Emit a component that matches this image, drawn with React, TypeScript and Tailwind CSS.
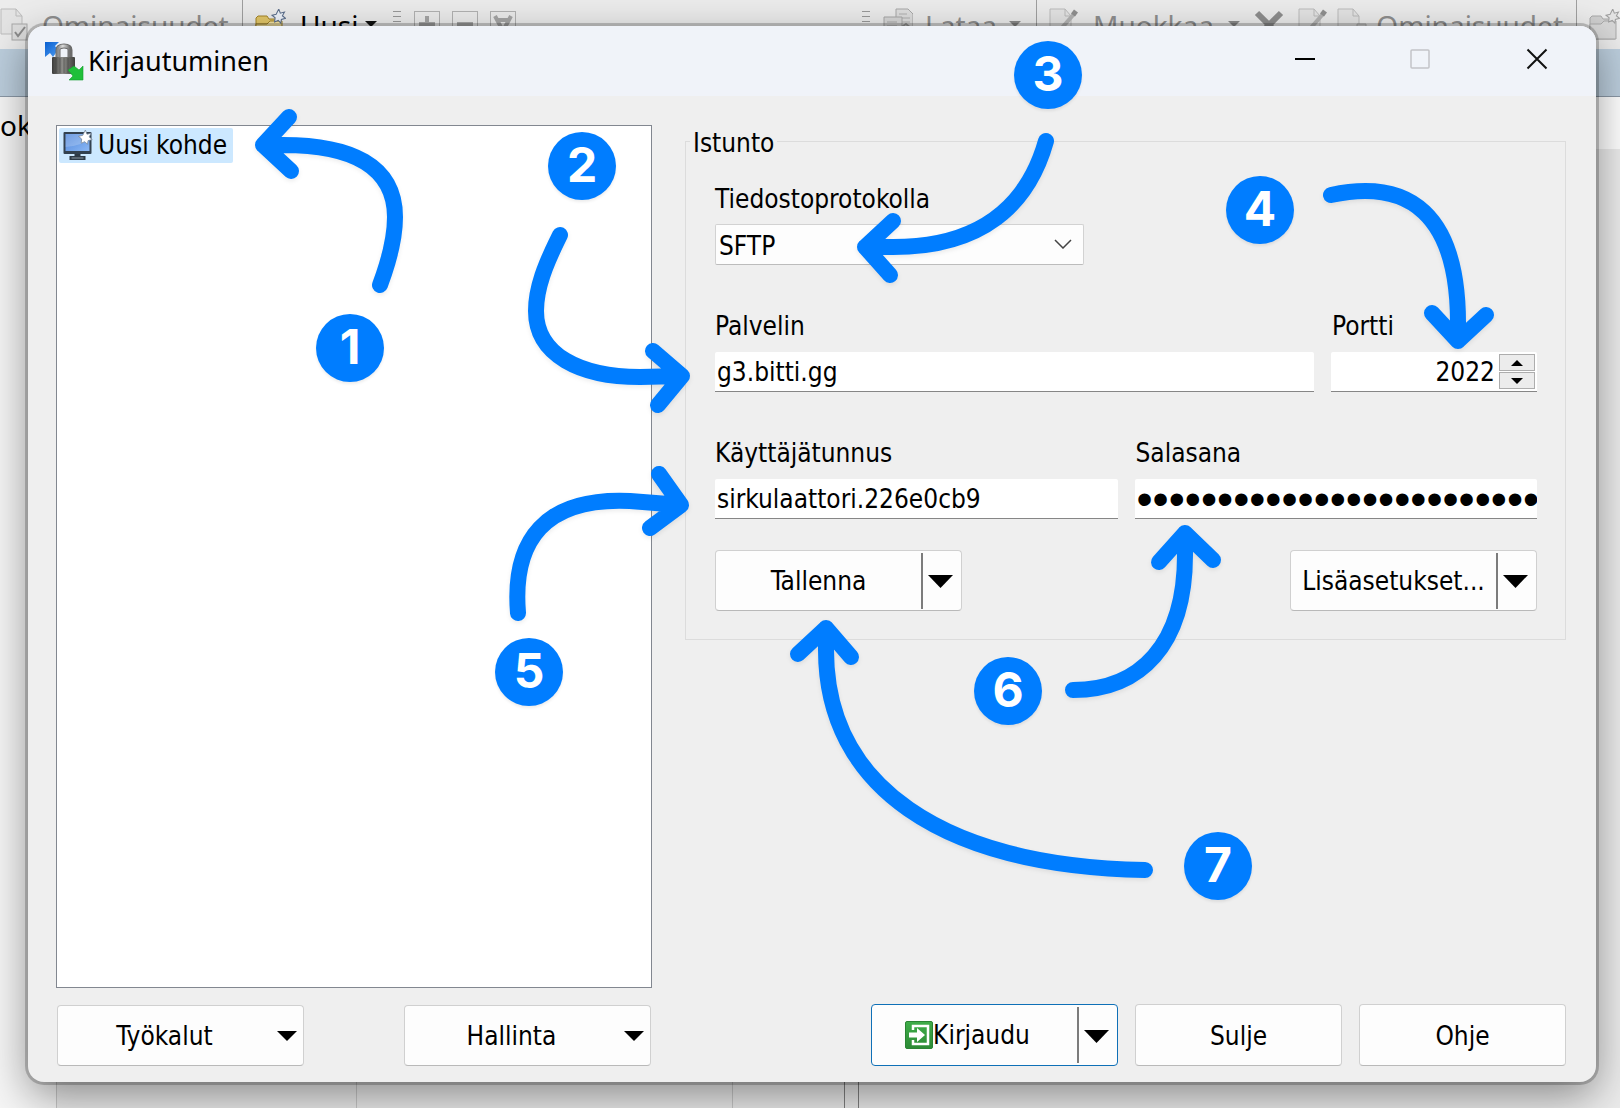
import React from "react";

const buttonFace =
  "rounded-[4px] border border-[#d0d0d0] border-b-[#b9b9b9] bg-[#fdfdfd] text-black";
const inputFace =
  "block h-[40px] w-full rounded-t-[2px] border-b border-[#868686] bg-white outline-none";

function Caret({ small = false }: { small?: boolean }) {
  return (
    <svg width={small ? 20 : 25} height={small ? 10 : 13} viewBox="0 0 26 13" preserveAspectRatio="none" aria-hidden="true">
      <path d="M0 0h26L13 13z" fill="#000" />
    </svg>
  );
}

function SmallCaret({ muted = false }: { muted?: boolean }) {
  return (
    <svg width="12" height="7" viewBox="0 0 12 7" aria-hidden="true">
      <path d="M0 0h12L6 6z" fill={muted ? "#8a8a8a" : "#111"} />
    </svg>
  );
}

const STAR = "M13 0l3 8 8-2-4 7 6 5-8 2-1 7-5-5-7 3 1-8-6-5 8-2z";

function FolderIcon({ muted = false }: { muted?: boolean }) {
  const line = muted ? "#a9a9a9" : "#a58527";
  return (
    <svg width="31" height="32" viewBox="0 0 31 32" aria-hidden="true">
      <path d="M1 30V9l2-2h9l2 3h12v20z" fill={muted ? "#cfcfcf" : "#e3c769"} stroke={line} />
      <path d="M1 30V15h11l3-3h12v18z" fill={muted ? "#d8d8d8" : "#f7e5a4"} stroke={line} />
      <path
        d={STAR}
        transform="translate(17 0) scale(.52)"
        fill={muted ? "#e4e4e4" : "#eef3fa"}
        stroke={muted ? "#a0a0a0" : "#5c6f8c"}
        strokeWidth="2"
      />
    </svg>
  );
}

function SheetIcon({ mark }: { mark: "check" | "pencil" | "none" }) {
  return (
    <svg width="30" height="34" viewBox="0 0 30 34" aria-hidden="true">
      <path d="M1 1h15l6 7v18H1z" fill="#e4e4e4" stroke="#bcbcbc" />
      <path d="M16 1v7h6" fill="none" stroke="#bcbcbc" />
      {mark === "check" && (
        <g>
          <rect x="12" y="16" width="15" height="16" fill="#dedede" stroke="#a8a8a8" />
          <path d="M15 24l3 4 7-9" fill="none" stroke="#8c8c8c" strokeWidth="2" />
        </g>
      )}
      {mark === "pencil" && (
        <g>
          <path d="M11 22L25 6" stroke="#b4b4b4" strokeWidth="4" />
          <path d="M24 7l3-4" stroke="#909090" strokeWidth="5" />
        </g>
      )}
      {mark === "none" && <path d="M20 16h9v10h-9z" fill="#d6d6d6" stroke="#b0b0b0" />}
    </svg>
  );
}

function CopyIcon() {
  return (
    <svg width="30" height="34" viewBox="0 0 30 34" aria-hidden="true">
      <path d="M13 1h12l5 5v19H13z" fill="#dedede" stroke="#a8a8a8" />
      <path d="M16 6h8M16 10h11M16 14h11" stroke="#b0b0b0" />
      <path d="M1 9h18v20H1z" fill="#d8d8d8" stroke="#a8a8a8" />
      <path d="M4 14h10M4 18h10" stroke="#a8a8a8" />
      <path d="M17 20l6-4 6 5" fill="none" stroke="#9a9a9a" strokeWidth="2" />
    </svg>
  );
}

function Grip() {
  return (
    <svg width="9" height="32" viewBox="0 0 9 32" aria-hidden="true">
      <path d="M0 2.500h8M0 7.500h8M0 12.500h8M0 17.500h8M0 22.500h8" stroke="#9a9a9a" />
    </svg>
  );
}

function BoxIcon({ d }: { d: string }) {
  return (
    <svg width="26" height="32" viewBox="0 0 26 32" aria-hidden="true">
      <rect x=".5" y="2.500" width="25" height="25" fill="none" stroke="#b2b2b2" />
      <path d={d} fill="none" stroke="#a6a6a6" strokeWidth="4" />
    </svg>
  );
}

function Backdrop() {
  return (
    <div className="flex min-h-screen flex-col font-['Noto_Sans',sans-serif] text-[28px]">
      <div className="flex h-[49px] items-center overflow-hidden bg-[#ececec] text-[#8f8f8f]">
        <div className="flex w-[243px] shrink-0 items-center gap-[12px] self-stretch border-r border-[#a0a0a0]">
          <SheetIcon mark="check" />
          <span>Ominaisuudet</span>
        </div>
        <div className="flex flex-1 items-center">
          <div className="ml-[12px] flex w-[122px] items-center text-black">
            <FolderIcon />
            <span className="flex-1 pl-[14px]">Uusi</span>
            <SmallCaret />
          </div>
          <div className="ml-[16px] flex items-center gap-[12px]">
            <Grip />
            <BoxIcon d="M5 15h16M13 7v16" />
            <BoxIcon d="M5 15h16" />
            <BoxIcon d="M5 7l8 15 8-15M8 11h10" />
          </div>
        </div>
        <div className="flex w-[174px] shrink-0 items-center gap-[12px]">
          <Grip />
          <CopyIcon />
          <span>Lataa</span>
          <SmallCaret muted />
        </div>
        <div className="flex w-[541px] shrink-0 items-center gap-[14px] self-stretch border-x border-[#a0a0a0] pl-[12px]">
          <SheetIcon mark="pencil" />
          <span>Muokkaa</span>
          <SmallCaret muted />
          <svg width="30" height="32" viewBox="0 0 30 32" aria-hidden="true">
            <path d="M3 4l24 24M27 4L3 28" stroke="#8e8e8e" strokeWidth="6" />
          </svg>
          <div className="flex flex-1 items-center justify-between pr-[13px]">
            <SheetIcon mark="pencil" />
            <SheetIcon mark="none" />
            <span>Ominaisuudet</span>
          </div>
        </div>
        <div className="w-[43px] shrink-0 pl-[12px]">
          <FolderIcon muted />
        </div>
      </div>
      <div className="h-[48px] border-b border-[#8b98a6] bg-[#bccedd]" />
      <div className="flex flex-1 justify-between overflow-hidden bg-[#ececec]">
        <div className="w-[56px] bg-[#f6f6f6] pt-[7px] text-black">ok</div>
        <div className="flex flex-1 items-end">
          <div className="h-[26px] w-[301px] border-x border-[#c9c9c9]" />
          <div className="h-[26px] w-[376px] border-r border-[#c9c9c9]" />
          <div className="h-[26px] w-[111px]" />
          <div className="h-[30px] w-[15px] border-x border-[#808080]" />
        </div>
        <div className="w-[30px]">
          <div className="h-[52px] bg-white" />
        </div>
      </div>
    </div>
  );
}

function AppIcon() {
  return (
    <svg width="40" height="40" viewBox="0 0 40 40" aria-hidden="true">
      <defs>
        <linearGradient id="body" x1="0" x2="1">
          <stop offset="0" stopColor="#3a3a3a" />
          <stop offset=".45" stopColor="#8c8c88" />
          <stop offset="1" stopColor="#3f3f3d" />
        </linearGradient>
        <linearGradient id="shackle" x1="0" x2="1">
          <stop offset="0" stopColor="#8a8a8a" />
          <stop offset=".4" stopColor="#dcdcdc" />
          <stop offset="1" stopColor="#6c6c6c" />
        </linearGradient>
        <linearGradient id="blue" x1="0" y1="0" x2="1" y2="1">
          <stop offset="0" stopColor="#0a5fd0" />
          <stop offset="1" stopColor="#4d9bf0" />
        </linearGradient>
      </defs>
      <path d="M1 1h14l-4 4 3 4-5 7-3-4-5 4z" fill="url(#blue)" />
      <path d="M14 18V9q0-4 6-4t6 4v9" fill="#f0f3f9" stroke="#6a6a6a" strokeWidth="5" />
      <path d="M14 18V9q0-4 6-4t6 4v9" fill="none" stroke="url(#shackle)" strokeWidth="3" />
      <rect x="8" y="16" width="23" height="17" rx="1" fill="url(#body)" />
      <path d="M12 17v15M16 17v15M20 17v15M24 17v15" stroke="#222" strokeOpacity=".35" />
      <path d="M39 25v14H25l4-4-5-6 6-4 5 4z" fill="#1fbf3a" stroke="#12a02b" strokeWidth=".6" />
    </svg>
  );
}

function MonitorIcon() {
  return (
    <svg className="shrink-0" width="31" height="32" viewBox="0 0 30 32" aria-hidden="true">
      <defs>
        <linearGradient id="screen" x1="0" y1="0" x2="1" y2="1">
          <stop offset="0" stopColor="#4f86da" />
          <stop offset="1" stopColor="#8bb8f5" />
        </linearGradient>
      </defs>
      <rect x="1" y="2" width="28" height="22" rx="1" fill="#33414f" />
      <rect x="3" y="4" width="24" height="17" fill="url(#screen)" />
      <path d="M3 4h24v4Q20 16 3 17z" fill="#fff" fillOpacity=".2" />
      <path d="M12 24h6v3h-6zM7 26h16v4H7z" fill="#2e3a46" />
      <path d="M9 28h12" stroke="#8a97a3" />
      <path d={STAR} transform="translate(16 0) scale(.53)" fill="#fff" stroke="#77879a" strokeWidth="1.500" />
    </svg>
  );
}

function LoginIcon() {
  return (
    <svg width="28" height="28" viewBox="0 0 28 28" aria-hidden="true">
      <defs>
        <linearGradient id="green" x1="0" y1="0" x2="0" y2="1">
          <stop offset="0" stopColor="#3fae49" />
          <stop offset="1" stopColor="#2c8a35" />
        </linearGradient>
      </defs>
      <rect x=".5" y=".5" width="27" height="27" rx="1.500" fill="url(#green)" stroke="#2a8433" />
      <path d="M8 9V5h15v18H8v-4" fill="none" stroke="#fff" strokeWidth="2.500" />
      <path d="M4 11.500h8V7l8 7-8 7v-4.500H4z" fill="#fff" />
    </svg>
  );
}

function SplitButton({
  label,
  icon,
  primary = false,
}: {
  label: string;
  icon?: React.ReactNode;
  primary?: boolean;
}) {
  return (
    <div
      className={
        primary
          ? "flex h-[62px] w-[247px] items-center rounded-[4px] border border-[#0f70b7] bg-[#fdfdfd]"
          : "flex h-[61px] w-[247px] items-center rounded-[4px] border border-[#d0d0d0] border-b-[#b9b9b9] bg-[#fdfdfd]"
      }
    >
      <button
        type="button"
        className={
          primary
            ? "flex h-full flex-1 items-center justify-center whitespace-nowrap pr-[14px]"
            : "flex h-full flex-1 items-center justify-center whitespace-nowrap pt-[2px]"
        }
      >
        {icon}
        {label}
      </button>
      <span className="h-[56px] w-[2px] bg-[#7c7c7c]" />
      <button type="button" aria-label={label + " – valikko"} className="flex h-full w-[38px] items-center justify-center pr-[3px] pt-[2px]">
        <Caret />
      </button>
    </div>
  );
}

function MenuButton({ label }: { label: string }) {
  return (
    <button type="button" className={"flex h-[61px] w-[247px] items-center pr-[6px] " + buttonFace}>
      <span className="flex-1 pr-[6px] pt-[2px] text-center">{label}</span>
      <Caret small />
    </button>
  );
}

const ARROWS = [
  "M380 285Q395 245 395 217C395 165 350 145 283 145H263M289 117L263 145L291 171",
  "M560 235C545 265 536 288 536 311C536 355 580 377 640 377L682 376M653 351L682 376L658 405",
  "M1046 141C1028 205 982 247 893 247H865M893 221L865 247L890 275",
  "M1331 195C1410 178 1458 215 1458 323V341M1432 313L1458 341L1486 315",
  "M518 613C512 540 545 497 630 501L681 505M659 474L681 505L650 528",
  "M1073 690C1140 690 1185 645 1185 555V533M1159 562L1185 533L1213 560",
  "M1145 870C940 866 826 785 826 650V628M798 654L826 628L851 657",
];

const BADGES = [
  "left-[316px] top-[314px]",
  "left-[548px] top-[132px]",
  "left-[1014px] top-[41px]",
  "left-[1226px] top-[176px]",
  "left-[495px] top-[638px]",
  "left-[974px] top-[657px]",
  "left-[1184px] top-[832px]",
];

function Annotations() {
  return (
    <div className="pointer-events-none absolute inset-0">
      <svg
        className="absolute left-0 top-0 h-[1108px] w-[1620px] drop-shadow-[0_2px_2px_rgba(0,0,0,0.08)]"
        viewBox="0 0 1620 1108"
        aria-hidden="true"
      >
        {ARROWS.map((d) => (
          <path
            key={d}
            d={d}
            fill="none"
            stroke="#007dff"
            strokeWidth="16"
            strokeLinecap="round"
            strokeLinejoin="round"
          />
        ))}
      </svg>
      {BADGES.map((place, i) => (
        <span
          key={place}
          className={
            "absolute flex h-[68px] w-[68px] items-center justify-center rounded-full bg-[#007dff] pb-[2px] font-['Inter',sans-serif] text-[48px] leading-none font-bold text-white shadow-[0_2px_3px_rgba(0,0,0,0.08)] " +
            place
          }
        >
          {i + 1}
        </span>
      ))}
    </div>
  );
}

function TitleBar() {
  return (
    <header className="flex h-[70px] items-center rounded-t-[16px] bg-[#f0f3f9] pl-[16px] font-['Noto_Sans',sans-serif] text-[27px]">
      <AppIcon />
      <h1 className="flex-1 pl-[4px]">Kirjautuminen</h1>
      <button type="button" aria-label="Pienennä" className="flex h-full w-[115px] items-center justify-center pb-[4px]">
        <svg width="20" height="20" viewBox="0 0 20 20">
          <path d="M0 10h20" stroke="#000" strokeWidth="2" />
        </svg>
      </button>
      <button type="button" disabled aria-label="Suurenna" className="flex h-full w-[115px] items-center justify-center pb-[4px]">
        <svg width="20" height="20" viewBox="0 0 20 20">
          <rect x="1" y="1" width="18" height="18" rx="1" fill="none" stroke="#c2c3c7" strokeWidth="1.500" />
        </svg>
      </button>
      <button type="button" aria-label="Sulje ikkuna" className="flex h-full w-[119px] items-center justify-center pb-[4px]">
        <svg width="22" height="22" viewBox="0 0 22 22">
          <path d="M1.500 1.500l19 19M20.500 1.500l-19 19" stroke="#111" strokeWidth="2" />
        </svg>
      </button>
    </header>
  );
}

function Session() {
  return (
    <fieldset className="relative h-[499px] border border-[#dcdcdc] pl-[29px] pr-[28px] pt-[36px]">
      <legend className="absolute -top-[16px] left-[4px] bg-[#efefef] px-[3px] leading-[34px]">
        Istunto
      </legend>
      <div className="w-[369px]">
        <label htmlFor="protocol" className="block h-[46px] leading-[42px]">
          Tiedostoprotokolla
        </label>
        <div className="relative">
          <select
            id="protocol"
            className="block h-[41px] w-full appearance-none rounded-[2px] border border-[#d2d2d2] border-b-[#bcbcbc] bg-[#fdfdfd] pl-[3px] pt-[2px] leading-[36px] outline-none"
          >
            <option>SFTP</option>
          </select>
          <svg className="pointer-events-none absolute right-[12px] top-[15px]" width="18" height="10" viewBox="0 0 18 10" aria-hidden="true">
            <path d="M1 1l8 8 8-8" fill="none" stroke="#444" strokeWidth="1.500" />
          </svg>
        </div>
      </div>

      <div className="mt-[41px] flex gap-[17px]">
        <div className="flex-1">
          <label htmlFor="host" className="block h-[46px] leading-[40px]">
            Palvelin
          </label>
          <input id="host" defaultValue="g3.bitti.gg" className={"pl-[2px] " + inputFace} />
        </div>
        <div className="w-[206px]">
          <label htmlFor="port" className="block h-[46px] pl-px leading-[40px]">
            Portti
          </label>
          <div className="relative">
            <input id="port" defaultValue="2022" className={"pr-[42px] text-right " + inputFace} />
            <div className="absolute right-[2px] top-[2px] flex flex-col gap-px">
              <button type="button" aria-label="Lisää" className="flex h-[17px] w-[36px] items-center justify-center border border-[#adadad] bg-[#ececec]">
                <svg width="12" height="6" viewBox="0 0 12 6">
                  <path d="M0 6h12L6 0z" />
                </svg>
              </button>
              <button type="button" aria-label="Vähennä" className="flex h-[17px] w-[36px] items-center justify-center border border-[#adadad] bg-[#ececec]">
                <svg width="12" height="6" viewBox="0 0 12 6">
                  <path d="M0 0h12L6 6z" />
                </svg>
              </button>
            </div>
          </div>
        </div>
      </div>

      <div className="mt-[41px] grid grid-cols-2 gap-[17px]">
        <div>
          <label htmlFor="user" className="block h-[46px] leading-[40px]">
            Käyttäjätunnus
          </label>
          <input id="user" defaultValue="sirkulaattori.226e0cb9" className={"pl-[2px] " + inputFace} />
        </div>
        <div>
          <label htmlFor="password" className="block h-[46px] pl-px leading-[40px]">
            Salasana
          </label>
          <input
            id="password"
            type="password"
            autoComplete="off"
            defaultValue="aaaaaaaaaaaaaaaaaaaaaaaaa"
            className={"pl-[2px] pt-[2px] font-['Liberation_Sans',sans-serif] text-[46px] " + inputFace}
          />
        </div>
      </div>

      <div className="mt-[31px] flex justify-between">
        <SplitButton label="Tallenna" />
        <SplitButton label="Lisäasetukset..." />
      </div>
    </fieldset>
  );
}

export default function App() {
  return (
    <div className="relative overflow-hidden">
      <div aria-hidden="true">
        <Backdrop />
      </div>
      <main className="absolute bottom-[26px] left-[28px] right-[24px] top-[26px] flex flex-col rounded-[16px] bg-[#efefef] font-['DejaVu_Sans_Condensed','Noto_Sans',sans-serif] text-[26px] text-black shadow-[0_0_0_3px_rgba(0,0,0,0.2),0_14px_44px_rgba(0,0,0,0.42)]">
        <TitleBar />
        <div className="flex flex-1 gap-[33px] pl-[28px] pr-[30px] pt-[29px]">
          <ul className="w-[596px] border border-[#828790] bg-white p-[2px]">
            <li className="flex h-[35px] w-[174px] items-center gap-[5px] whitespace-nowrap rounded-[2px] bg-[#cce8ff] pl-[3px]">
              <MonitorIcon />
              Uusi kohde
            </li>
          </ul>
          <div className="flex-1 pt-[16px]">
            <Session />
          </div>
        </div>
        <footer className="flex items-end justify-between pb-[16px] pl-[29px] pr-[30px] pt-[16px]">
          <div className="flex gap-[100px]">
            <MenuButton label="Työkalut" />
            <MenuButton label="Hallinta" />
          </div>
          <div className="flex gap-[17px]">
            <SplitButton label="Kirjaudu" icon={<LoginIcon />} primary />
            <button type="button" className={"h-[62px] w-[207px] pt-[2px] " + buttonFace}>
              Sulje
            </button>
            <button type="button" className={"h-[62px] w-[207px] pt-[2px] " + buttonFace}>
              Ohje
            </button>
          </div>
        </footer>
      </main>
      <Annotations />
    </div>
  );
}
